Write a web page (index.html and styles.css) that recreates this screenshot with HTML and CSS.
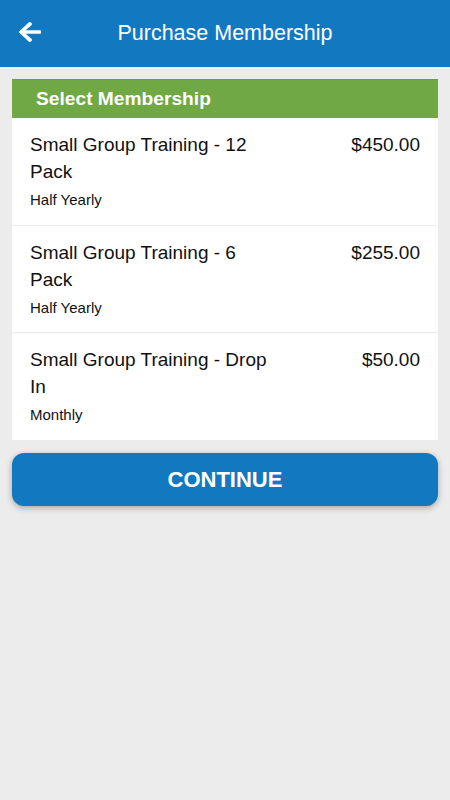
FILE: index.html
```html
<!DOCTYPE html>
<html>
<head>
<meta charset="utf-8">
<link rel="stylesheet" href="styles.css">
</head>
<body>
<header class="topbar">
  <svg class="back" viewBox="0 38 448 436" width="22" height="20" preserveAspectRatio="none"><path fill="#fff" d="M257.5 445.1l-22.2 22.2c-9.4 9.4-24.6 9.4-33.9 0L7 273c-9.4-9.4-9.4-24.6 0-33.9L201.4 44.7c9.4-9.4 24.6-9.4 33.9 0l22.2 22.2c9.5 9.5 9.3 25-.4 34.3L136.6 216H424c13.3 0 24 10.7 24 24v32c0 13.3-10.7 24-24 24H136.6l120.5 114.8c9.8 9.3 10 24.8.4 34.3z"/></svg>
  <h1 class="title">Purchase Membership</h1>
</header>
<main class="content">
  <section class="card">
    <div class="card-head">Select Membership</div>
    <div class="item">
      <div class="info">
        <div class="name">Small Group Training - 12 Pack</div>
        <div class="period">Half Yearly</div>
      </div>
      <div class="price">$450.00</div>
    </div>
    <div class="item">
      <div class="info">
        <div class="name">Small Group Training - 6 Pack</div>
        <div class="period">Half Yearly</div>
      </div>
      <div class="price">$255.00</div>
    </div>
    <div class="item">
      <div class="info">
        <div class="name">Small Group Training - Drop In</div>
        <div class="period">Monthly</div>
      </div>
      <div class="price">$50.00</div>
    </div>
  </section>
  <button class="continue">CONTINUE</button>
</main>
</body>
</html>
```
FILE: styles.css
```css
html, body {
  margin: 0;
  padding: 0;
}
body {
  background: #ececec;
  font-family: "Liberation Sans", Arial, sans-serif;
  width: 450px;
  height: 800px;
  overflow: hidden;
}
.topbar {
  background: #1279c1;
  height: 67px;
  display: flex;
  align-items: center;
  justify-content: center;
  position: relative;
}
.back {
  position: absolute;
  left: 19px;
  top: 22px;
}
.title {
  margin: 0;
  color: #fff;
  font-weight: normal;
  font-size: 21.5px;
}
.content {
  padding: 12px 12px;
}
.card {
  background: #fff;
}
.card-head {
  background: #70a844;
  border-top: 1px solid #6aa03f;
  color: #fff;
  font-weight: bold;
  font-size: 19.2px;
  height: 38px;
  line-height: 38px;
  padding-left: 24px;
}
.item {
  display: flex;
  justify-content: space-between;
  padding: 13px 18px 14.5px 18px;
  border-bottom: 1px solid #ececec;
}
.item:last-child {
  border-bottom: none;
}
.info {
  width: 250px;
}
.name {
  font-size: 19px;
  line-height: 27px;
  color: #111;
}
.period {
  font-size: 15px;
  line-height: 20px;
  margin-top: 5px;
  color: #111;
}
.price {
  font-size: 19px;
  line-height: 27px;
  color: #111;
}
.continue {
  display: block;
  width: 100%;
  margin-top: 13px;
  height: 53px;
  border: none;
  border-radius: 12px;
  background: #1279c1;
  color: #fff;
  font-family: "Liberation Sans", Arial, sans-serif;
  font-weight: bold;
  font-size: 22px;
  padding-top: 2px;
  box-shadow: 0 2px 6px rgba(0,0,0,0.3);
}
```
